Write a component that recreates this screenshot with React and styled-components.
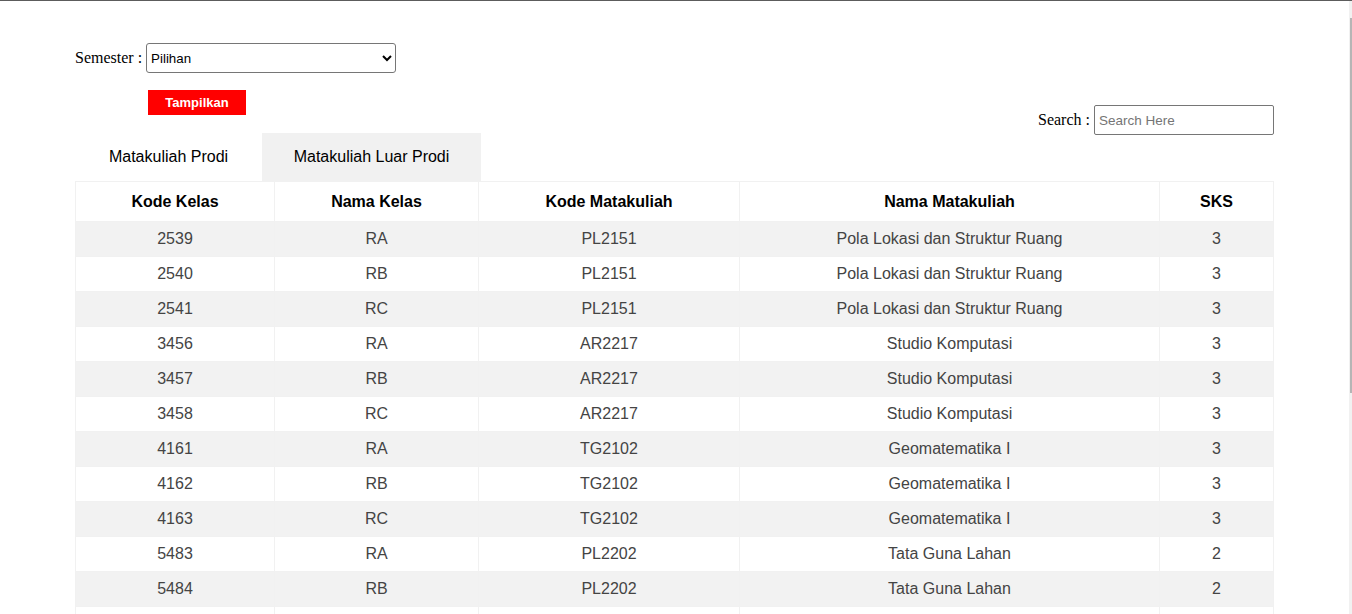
import React from "react";
import styled, { createGlobalStyle } from "styled-components";

const GlobalStyle = createGlobalStyle`
    html, body {
        margin: 0;
        padding: 0;
        background: #fff;
    }
    body {
        font-family: "Liberation Serif", "Times New Roman", serif;
        border-top: 1px solid #5c5c5c;
        overflow: hidden;
    }
`

const rows = [
    ["2539", "RA", "PL2151", "Pola Lokasi dan Struktur Ruang", "3"],
    ["2540", "RB", "PL2151", "Pola Lokasi dan Struktur Ruang", "3"],
    ["2541", "RC", "PL2151", "Pola Lokasi dan Struktur Ruang", "3"],
    ["3456", "RA", "AR2217", "Studio Komputasi", "3"],
    ["3457", "RB", "AR2217", "Studio Komputasi", "3"],
    ["3458", "RC", "AR2217", "Studio Komputasi", "3"],
    ["4161", "RA", "TG2102", "Geomatematika I", "3"],
    ["4162", "RB", "TG2102", "Geomatematika I", "3"],
    ["4163", "RC", "TG2102", "Geomatematika I", "3"],
    ["5483", "RA", "PL2202", "Tata Guna Lahan", "2"],
    ["5484", "RB", "PL2202", "Tata Guna Lahan", "2"],
    ["5485", "RC", "PL2202", "Tata Guna Lahan", "2"],
];

const columns = [
    { title: "Kode Kelas", width: 199 },
    { title: "Nama Kelas", width: 204 },
    { title: "Kode Matakuliah", width: 261 },
    { title: "Nama Matakuliah", width: 420 },
    { title: "SKS", width: 114 },
];

const App = () => {
    return (
        <>
            <GlobalStyle />
            <Page>
                <Header>
                    <Filter>
                        <Field>
                            <Label>Semester :</Label>
                            <Select defaultValue="">
                                <option value="">Pilihan</option>
                                <option value="1">Ganjil</option>
                                <option value="2">Genap</option>
                            </Select>
                        </Field>
                        <ShowButton>Tampilkan</ShowButton>
                    </Filter>
                    <SearchBox>
                        <Label>Search :</Label>
                        <SearchInput placeholder="Search Here" />
                    </SearchBox>
                </Header>

                <Tabs>
                    <Tab active width={187}>Matakuliah Prodi</Tab>
                    <Tab width={219}>Matakuliah Luar Prodi</Tab>
                </Tabs>

                <Table>
                    <colgroup>
                        {columns.map((c) => (
                            <col key={c.title} style={{ width: c.width }} />
                        ))}
                    </colgroup>
                    <thead>
                        <tr>
                            {columns.map((c) => (
                                <Th key={c.title}>{c.title}</Th>
                            ))}
                        </tr>
                    </thead>
                    <tbody>
                        {rows.map((row, i) => (
                            <Row key={row[0]} striped={i % 2 === 0}>
                                {row.map((cell, j) => (
                                    <Td key={j}>{cell}</Td>
                                ))}
                            </Row>
                        ))}
                    </tbody>
                </Table>
            </Page>
            <ScrollTrack>
                <ScrollThumb />
            </ScrollTrack>
        </>
    );
};

const Page = styled.div`
    width: 1199px;
    padding: 42px 0 0 75px;
`

const Header = styled.div`
    display: flex;
    justify-content: space-between;
    align-items: flex-start;
`

const Filter = styled.div`
    display: flex;
    flex-direction: column;
    align-items: flex-start;
`

const Field = styled.div`
    display: flex;
    align-items: center;
    gap: 4px;
`

const Label = styled.label`
    font-family: "Liberation Serif", "Times New Roman", serif;
    font-size: 16px;
    color: #000;
`

const Select = styled.select`
    width: 250px;
    height: 30px;
    font-family: "Liberation Sans", Arial, sans-serif;
    font-size: 13.33px;
    color: #000;
    padding: 0;
    border: 1px solid #767676;
    border-radius: 3px;
    background: #fff;
`

const ShowButton = styled.button`
    margin: 17px 0 0 73px;
    width: 98px;
    height: 25px;
    background: #ff0000;
    color: #fff;
    border: none;
    font-family: "Liberation Sans", Arial, sans-serif;
    font-weight: bold;
    font-size: 13px;
    padding: 0;
`

const SearchBox = styled.div`
    display: flex;
    align-items: center;
    gap: 4px;
    margin-top: 62px;
`

const SearchInput = styled.input`
    width: 180px;
    height: 30px;
    box-sizing: border-box;
    border: 1px solid #767676;
    border-radius: 2px;
    padding: 0 4px;
    font-family: "Liberation Sans", Arial, sans-serif;
    font-size: 13.5px;
    &::placeholder {
        color: #757575;
    }
`

const Tabs = styled.div`
    display: flex;
    margin-top: -2px;
`

const Tab = styled.div`
    width: ${(p) => p.width}px;
    height: 48px;
    display: flex;
    align-items: center;
    justify-content: center;
    background: ${(p) => (p.active ? "#fff" : "#f1f1f1")};
    font-family: "Liberation Sans", Arial, sans-serif;
    font-size: 16px;
    color: #000;
`

const Table = styled.table`
    width: 1198px;
    table-layout: fixed;
    border-collapse: collapse;
    font-family: "Liberation Sans", Arial, sans-serif;
    font-size: 16px;
    text-align: center;
`

const Th = styled.th`
    height: 39px;
    padding: 0;
    font-weight: bold;
    color: #000;
    border: 1px solid #f1f1f1;
`

const Row = styled.tr`
    background: ${(p) => (p.striped ? "#f2f2f2" : "#fff")};
`

const Td = styled.td`
    height: 34px;
    padding: 0;
    color: #444;
    border: 1px solid #f1f1f1;
`

const ScrollTrack = styled.div`
    position: fixed;
    top: 1px;
    right: 0;
    width: 3px;
    height: 100%;
    background: #f1f1f1;
`

const ScrollThumb = styled.div`
    margin: 17px 0 0 1px;
    height: 375px;
    background: #b5b5b5;
`

export default App;
